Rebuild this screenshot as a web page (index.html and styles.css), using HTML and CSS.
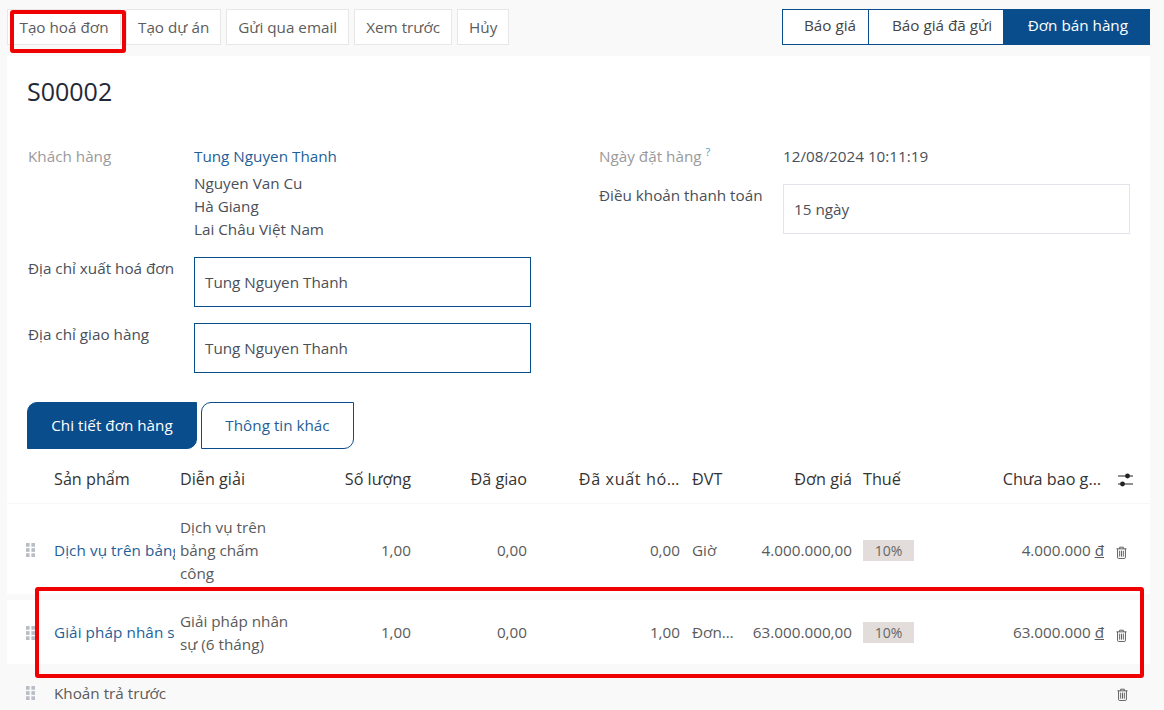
FILE: index.html
```html
<!DOCTYPE html>
<html>
<head>
  <meta charset="UTF-8">
  <meta name="viewport" content="width=device-width, initial-scale=1.0">
  <title>S00002</title>
  <link rel="stylesheet" href="styles.css">
</head>

<body>
  <div class="topbar">
    <div class="actions">
      <button class="action-button first">Tạo hoá đơn</button>
      <button class="action-button">Tạo dự án</button>
      <button class="action-button">Gửi qua email</button>
      <button class="action-button">Xem trước</button>
      <button class="action-button">Hủy</button>
    </div>
    <div class="status-bar">
      <div class="status status-quote">Báo giá</div>
      <div class="status status-sent">Báo giá đã gửi</div>
      <div class="status status-order">Đơn bán hàng</div>
    </div>
  </div>

  <div class="sheet">
    <h1 class="title">S00002</h1>

    <div class="form-columns">
      <div class="form-group left-group">
        <div class="label muted">Khách hàng</div>
        <div class="customer">
          <a class="link customer-name">Tung Nguyen Thanh</a>
          <div class="address">
            <div>Nguyen Van Cu</div>
            <div>Hà Giang</div>
            <div>Lai Châu Việt Nam</div>
          </div>
        </div>
        <div class="label">Địa chỉ xuất hoá đơn</div>
        <div class="field field-required">Tung Nguyen Thanh</div>
        <div class="label">Địa chỉ giao hàng</div>
        <div class="field field-required">Tung Nguyen Thanh</div>
      </div>

      <div class="form-group right-group">
        <div class="label muted">Ngày đặt hàng <sup class="help">?</sup></div>
        <div class="value">12/08/2024 10:11:19</div>
        <div class="label">Điều khoản thanh toán</div>
        <div class="field">15 ngày</div>
      </div>
    </div>

    <div class="tabs">
      <div class="tab tab-active">Chi tiết đơn hàng</div>
      <div class="tab">Thông tin khác</div>
    </div>

    <div class="order-lines">
      <div class="line line-head">
        <div></div>
        <div class="cell">Sản phẩm</div>
        <div class="cell">Diễn giải</div>
        <div class="cell right">Số lượng</div>
        <div class="cell right">Đã giao</div>
        <div class="cell right head-invoiced">Đã xuất hó…</div>
        <div class="cell cell-uom">ĐVT</div>
        <div class="cell right">Đơn giá</div>
        <div class="cell cell-tax">Thuế</div>
        <div class="cell right head-total">Chưa bao g…</div>
        <div class="cell-icon">
          <svg class="sliders" width="16" height="14" viewBox="0 0 16 14">
            <path d="M1 3h15M1 11h15" stroke="#222" stroke-width="1.1"/>
            <circle cx="10.5" cy="3" r="2.4" fill="#222"/>
            <circle cx="5.5" cy="11" r="2.4" fill="#222"/>
          </svg>
        </div>
      </div>

      <div class="line line-body">
        <div class="cell-handle">
          <svg class="handle" width="9" height="14" viewBox="0 0 10 15" preserveAspectRatio="none"><use href="#dots"/></svg>
        </div>
        <div class="cell clip"><a class="link">Dịch vụ trên bảng chấm công</a></div>
        <div class="cell">Dịch vụ trên bảng chấm công</div>
        <div class="cell right">1,00</div>
        <div class="cell right">0,00</div>
        <div class="cell right">0,00</div>
        <div class="cell cell-uom">Giờ</div>
        <div class="cell right">4.000.000,00</div>
        <div class="cell cell-tax"><span class="tax">10%</span></div>
        <div class="cell right">4.000.000 <u>đ</u></div>
        <div class="cell-icon">
          <svg class="trash" width="11" height="13" viewBox="0 0 12 14"><use href="#bin"/></svg>
        </div>
      </div>

      <div class="line line-body">
        <div class="cell-handle">
          <svg class="handle" width="9" height="14" viewBox="0 0 10 15" preserveAspectRatio="none"><use href="#dots"/></svg>
        </div>
        <div class="cell clip"><a class="link">Giải pháp nhân sự (6 tháng)</a></div>
        <div class="cell">Giải pháp nhân sự (6 tháng)</div>
        <div class="cell right">1,00</div>
        <div class="cell right">0,00</div>
        <div class="cell right">1,00</div>
        <div class="cell cell-uom">Đơn…</div>
        <div class="cell right">63.000.000,00</div>
        <div class="cell cell-tax"><span class="tax">10%</span></div>
        <div class="cell right">63.000.000 <u>đ</u></div>
        <div class="cell-icon">
          <svg class="trash" width="11" height="13" viewBox="0 0 12 14"><use href="#bin"/></svg>
        </div>
      </div>

      <div class="line line-section">
        <div class="cell-handle">
          <svg class="handle" width="9" height="14" viewBox="0 0 10 15" preserveAspectRatio="none"><use href="#dots"/></svg>
        </div>
        <div class="cell section-name">Khoản trả trước</div>
        <div class="cell-icon">
          <svg class="trash" width="11" height="13" viewBox="0 0 12 14"><use href="#bin"/></svg>
        </div>
      </div>
    </div>
  </div>

  <!-- red marks drawn on top of the screenshot -->
  <div class="mark mark-button"></div>
  <div class="mark mark-row"></div>

  <svg class="defs" width="0" height="0">
    <defs>
      <g id="dots" fill="#b9bdc5">
        <rect x="0" y="0" width="4" height="4"/><rect x="6" y="0" width="4" height="4"/>
        <rect x="0" y="5.5" width="4" height="4"/><rect x="6" y="5.5" width="4" height="4"/>
        <rect x="0" y="11" width="4" height="4"/><rect x="6" y="11" width="4" height="4"/>
      </g>
      <g id="bin" fill="none" stroke="#555" stroke-width="1">
        <path d="M0.5 3h11M4 3V1.2h4V3"/>
        <path d="M1.7 3v9.3q0 1.2 1.2 1.2h6.2q1.2 0 1.2-1.2V3"/>
        <path d="M4 5v6.5M6 5v6.5M8 5v6.5"/>
      </g>
    </defs>
  </svg>
</body>
</html>
```

FILE: styles.css
```css
html, body {
  height: 710px;
  overflow: hidden;
}

body {
  font-family: "Open Sans", sans-serif;
  font-size: 15.25px;
  line-height: 23px;
  color: #4a4f59;
  background-color: #f9f9f9;
  margin: 0;
  padding: 0;
  position: relative;
}

.topbar {
  height: 56px;
  box-sizing: border-box;
  padding: 9px 14px 0 7px;
  display: flex;
  justify-content: space-between;
  align-items: flex-start;
}

.actions {
  display: flex;
  gap: 5px;
}

.action-button {
  height: 36px;
  padding: 0 11px;
  font: inherit;
  color: #5c5c5c;
  background-color: #fff;
  border: 1px solid #e7e7e7;
}

.action-button.first {
  width: 114px;
}

.status-bar {
  display: flex;
  height: 36px;
}

.status {
  box-sizing: border-box;
  height: 36px;
  line-height: 31px;
  text-align: right;
  border: 1.5px solid #0a4d8c;
  background-color: #fff;
  color: #444;
}

.status-quote {
  width: 86px;
  padding-right: 12px;
  border-right-width: 0;
}

.status-sent {
  width: 135px;
  padding-right: 11px;
  border-right-width: 0;
}

.status-order {
  width: 147px;
  padding-right: 21px;
  background-color: #0a4d8c;
  color: #fff;
  font-weight: 500;
}

.sheet {
  margin: 0 14px 0 7px;
  padding: 17px 20px 0 21px;
  height: 654px;
  box-sizing: border-box;
  background-color: #fff;
}

.title {
  margin: 0 0 36px -1px;
  font-size: 25px;
  line-height: 36px;
  font-weight: 400;
  color: #1f2937;
}

.form-columns {
  display: grid;
  grid-template-columns: 503px 531px;
  column-gap: 68px;
}

.form-group {
  display: grid;
  row-gap: 16px;
  align-items: start;
}

.left-group {
  grid-template-columns: 166px 337px;
}

.right-group {
  grid-template-columns: 184px 347px;
  align-content: start;
}

.label {
  color: #4a4f59;
}

.muted {
  color: #9a9a9a;
}

.help {
  font-size: 11px;
  line-height: 0;
  color: #4aa3c7;
}

.link {
  color: #1f5f99;
}

.customer-name {
  display: block;
  margin-bottom: 3.5px;
}

.field {
  box-sizing: border-box;
  height: 50px;
  line-height: 48px;
  padding: 0 10px;
  border: 1px solid #e3e3ec;
}

.field-required {
  border-color: #0a4d8c;
}

.tabs {
  display: flex;
  gap: 4px;
  margin: 29px 0 0 -1px;
}

.tab {
  box-sizing: border-box;
  height: 47px;
  line-height: 45px;
  width: 153px;
  text-align: center;
  color: #1f5f99;
  border: 1px solid #0a4d8c;
  border-radius: 10px 0 10px 0;
}

.tab-active {
  width: 170px;
  background-color: #0a4d8c;
  color: #fff;
  font-weight: 500;
}

.order-lines {
  margin: 0 -20px 0 -21px;
}

.line {
  display: grid;
  grid-template-columns: 42px 126px 123px 118px 116px 153px 60px 112px 103px 149px 41px;
  align-items: center;
}

.cell {
  padding: 0 5px;
  min-width: 0;
}

.cell-uom {
  padding-left: 7px;
}

.cell-tax {
  padding-left: 6px;
}

.right {
  text-align: right;
}

.clip {
  overflow: hidden;
  white-space: nowrap;
  letter-spacing: 0.08px;
}

.line-head {
  height: 55px;
  padding-top: 7px;
  box-sizing: border-box;
  color: #333;
  font-size: 16.2px;
  font-weight: 500;
  border-bottom: 1px solid #f7f7f7;
}

.head-invoiced {
  letter-spacing: 0.6px;
}

.head-total {
  padding-right: 8px;
}

.line-body {
  padding: 12px 0 9px;
  color: #5a5a5a;
  border-bottom: 6px solid #f9f9f9;
}

.line-body + .line-body {
  padding: 10px 0 8px;
  border-bottom: 0;
}

.line-section {
  grid-template-columns: 42px 1061px 41px;
  padding-top: 18px;
  height: 60px;
  box-sizing: border-box;
  align-items: start;
  color: #5a5a5a;
  background-color: #f9f9f9;
}

.cell-handle {
  padding-left: 19px;
  line-height: 0;
}

.line-section .cell-handle {
  padding-top: 4px;
}

.cell-icon {
  padding-left: 7px;
  line-height: 0;
}

.sliders {
  margin: 2px 0 0 1px;
}

.trash {
  margin-top: 5px;
}

.line-section .trash {
  margin-top: 6px;
}

.tax {
  display: block;
  width: 51px;
  height: 21px;
  line-height: 21px;
  text-align: center;
  background-color: #e2dddb;
  color: #666;
  font-size: 14px;
}

.defs {
  position: absolute;
}

.mark {
  position: absolute;
  box-sizing: border-box;
  border: 4px solid #f00000;
  border-radius: 3px;
}

.mark-button {
  left: 10px;
  top: 10px;
  width: 116px;
  height: 43px;
}

.mark-row {
  left: 35px;
  top: 587px;
  width: 1109px;
  height: 91px;
}
```
